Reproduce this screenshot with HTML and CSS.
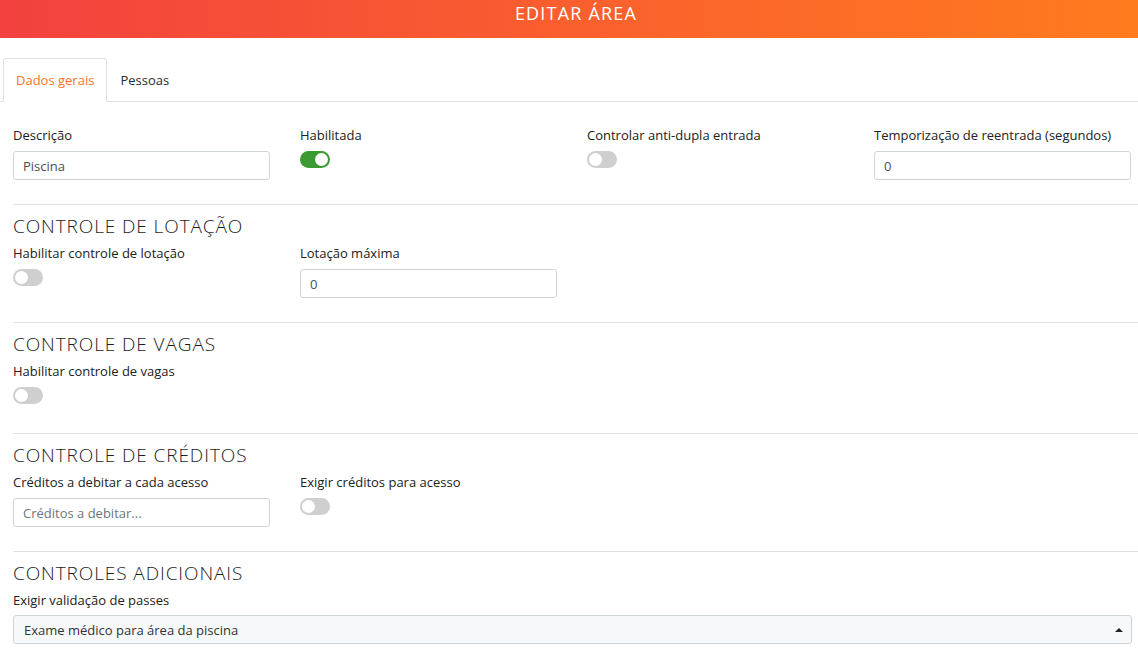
FILE: index.html
```html
<!DOCTYPE html>
<html lang="pt-BR">
<head>
    <meta charset="UTF-8">
    <title>Editar Área</title>
    <link rel="stylesheet" href="styles.css">
</head>
<body>
    <header class="topbar">EDITAR ÁREA</header>

    <nav class="tabs">
        <a class="tab active">Dados gerais</a>
        <a class="tab">Pessoas</a>
    </nav>

    <main class="content">
        <div class="row">
            <div class="field">
                <label>Descrição</label>
                <input class="input" type="text" value="Piscina">
            </div>
            <div class="field">
                <label>Habilitada</label>
                <span class="switch on"></span>
            </div>
            <div class="field">
                <label>Controlar anti-dupla entrada</label>
                <span class="switch"></span>
            </div>
            <div class="field">
                <label>Temporização de reentrada (segundos)</label>
                <input class="input" type="text" value="0">
            </div>
        </div>

        <hr class="divider">
        <h2 class="section-title">CONTROLE DE LOTAÇÃO</h2>
        <div class="row">
            <div class="field">
                <label>Habilitar controle de lotação</label>
                <span class="switch"></span>
            </div>
            <div class="field">
                <label>Lotação máxima</label>
                <input class="input" type="text" value="0">
            </div>
        </div>

        <hr class="divider">
        <h2 class="section-title">CONTROLE DE VAGAS</h2>
        <div class="row">
            <div class="field">
                <label>Habilitar controle de vagas</label>
                <span class="switch"></span>
            </div>
        </div>

        <hr class="divider">
        <h2 class="section-title">CONTROLE DE CRÉDITOS</h2>
        <div class="row">
            <div class="field">
                <label>Créditos a debitar a cada acesso</label>
                <input class="input" type="text" placeholder="Créditos a debitar...">
            </div>
            <div class="field">
                <label>Exigir créditos para acesso</label>
                <span class="switch"></span>
            </div>
        </div>

        <hr class="divider">
        <h2 class="section-title">CONTROLES ADICIONAIS</h2>
        <div class="field">
            <label class="tight">Exigir validação de passes</label>
            <div class="select">
                <span>Exame médico para área da piscina</span>
                <span class="caret"></span>
            </div>
        </div>
    </main>
</body>
</html>
```

FILE: styles.css
```css
body {
    margin: 0;
    font-family: 'Open Sans', sans-serif;
    font-size: 13px;
    color: #212121;
    background-color: #fff;
}

.topbar {
    height: 38px;
    line-height: 26px;
    padding-left: 14px;
    text-align: center;
    color: #fff;
    font-size: 18px;
    letter-spacing: 1.2px;
    background: linear-gradient(90deg, #f2413f 0%, #fa5f2e 50%, #ff7b1e 100%);
}

.tabs {
    display: flex;
    margin-top: 20px;
    padding-left: 3px;
    border-bottom: 1px solid #dee2e6;
    height: 43px;
}

.tab {
    display: flex;
    align-items: center;
    padding: 0 12px;
    margin-bottom: -1px;
    border: 1px solid transparent;
    border-radius: 3px 3px 0 0;
    color: #2b2b33;
    cursor: pointer;
}

.tab.active {
    color: #f7751f;
    background-color: #fff;
    border-color: #dee2e6 #dee2e6 #fff;
}

.content {
    padding: 25px 6px 0 13px;
}

.row {
    display: grid;
    grid-template-columns: repeat(4, 257px);
    column-gap: 30px;
}

.field {
    display: flex;
    flex-direction: column;
    align-items: flex-start;
}

.field label {
    margin-bottom: 8px;
    line-height: 16px;
}

.field label.tight {
    margin-bottom: 7px;
}

.input {
    width: 100%;
    height: 29px;
    box-sizing: border-box;
    padding: 0 9px;
    border: 1px solid #ced4da;
    border-radius: 3px;
    font-family: inherit;
    font-size: 13px;
    color: #495057;
}

.input::placeholder {
    color: #6c757d;
}

.switch {
    position: relative;
    display: inline-block;
    width: 30px;
    height: 17px;
    margin-bottom: 5px;
    border-radius: 9px;
    background-color: #cfcfcf;
}

.switch::after {
    content: '';
    position: absolute;
    top: 2px;
    left: 2px;
    width: 13px;
    height: 13px;
    border-radius: 50%;
    background-color: #fff;
}

.switch.on {
    background-color: #3b9a31;
}

.switch.on::after {
    left: 15px;
}

.divider {
    border: 0;
    border-top: 1px solid #e2e2e2;
    margin: 24px -6px 0 0;
}

.section-title {
    margin: 10px 0 8px;
    font-size: 19px;
    font-weight: 300;
    letter-spacing: 0.9px;
    line-height: 22px;
    color: #1d1d1d;
}

.select {
    width: 1119px;
    height: 29px;
    box-sizing: border-box;
    display: flex;
    align-items: center;
    justify-content: space-between;
    padding: 0 10px;
    border: 1px solid #ced4da;
    border-radius: 3px;
    background-color: #f7f8fa;
    color: #333;
}

.caret {
    width: 0;
    height: 0;
    border-left: 4px solid transparent;
    border-right: 4px solid transparent;
    border-bottom: 4px solid #222;
    margin-right: -2px;
}
```
